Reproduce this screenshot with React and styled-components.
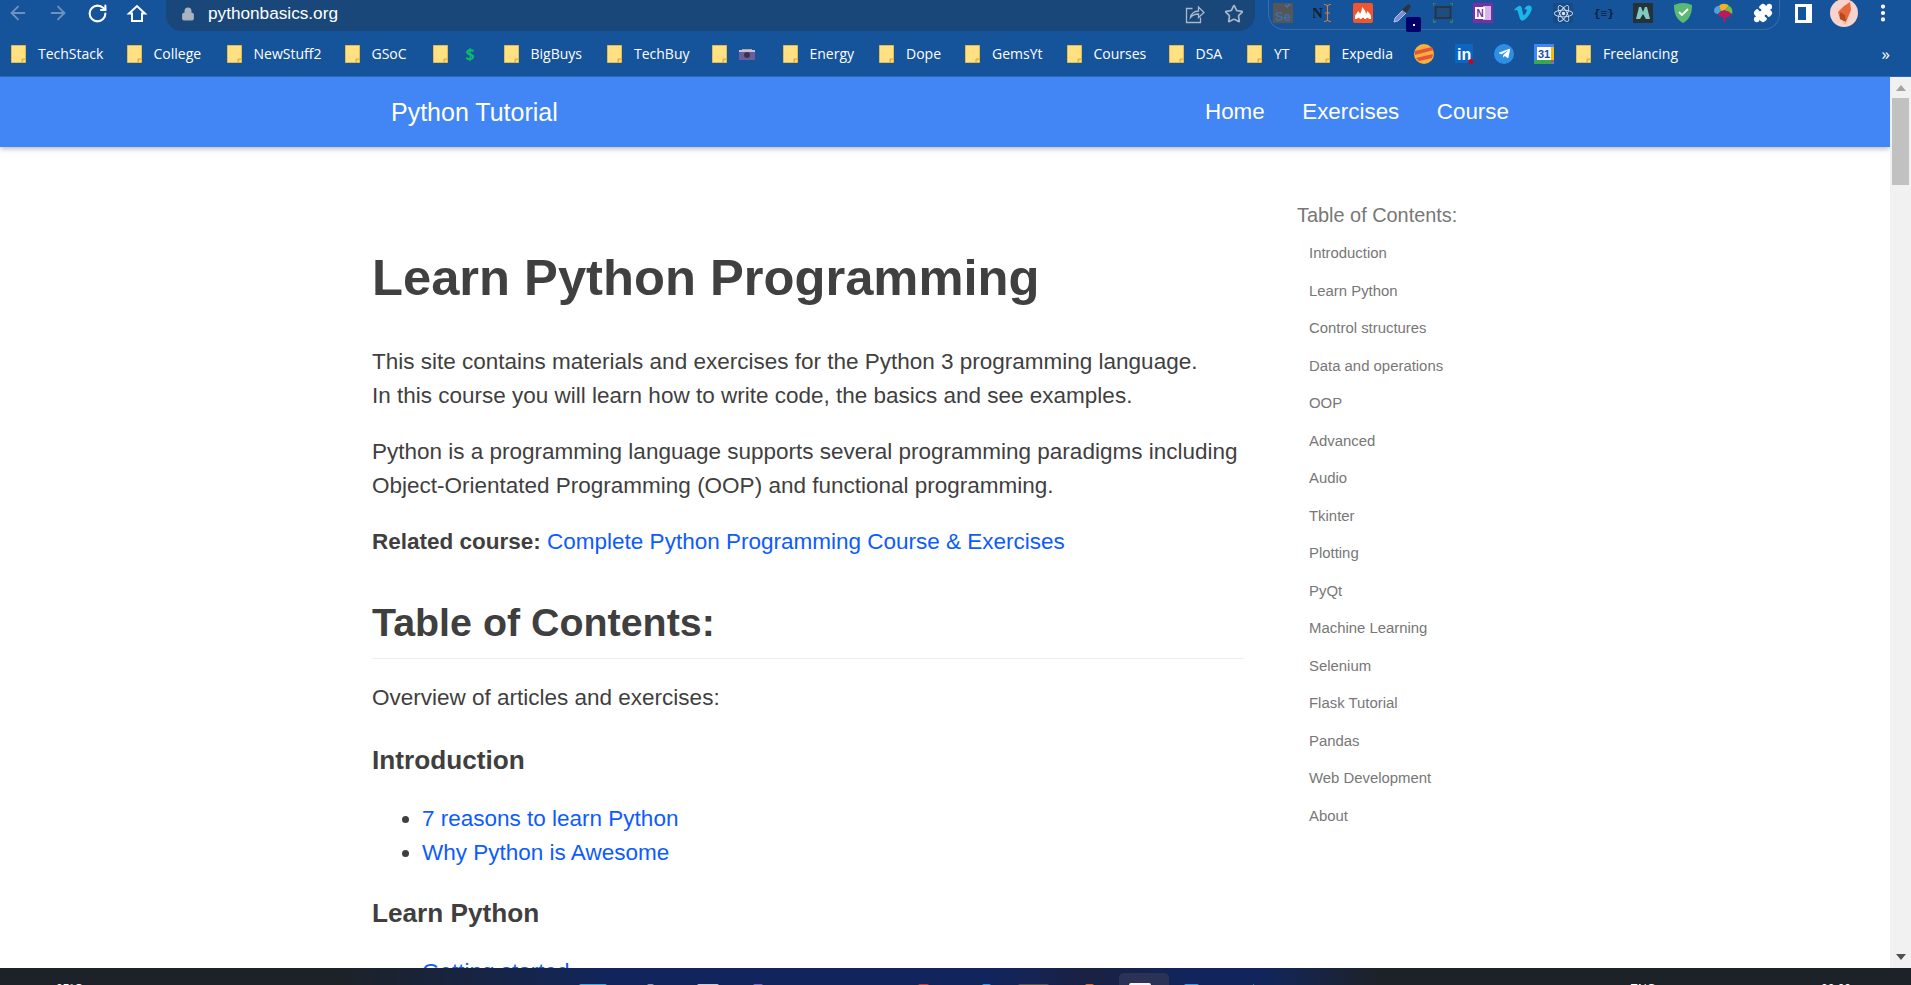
import React from 'react';
import styled, { createGlobalStyle } from 'styled-components';
import { ArrowLeft, ArrowRight, RotateCw, Lock, Star, MoreVertical, Puzzle } from 'lucide-react';
import { FaReact, FaVimeoV, FaTelegramPlane } from 'react-icons/fa';

const GlobalStyle = createGlobalStyle`
  html, body {
    margin: 0;
    padding: 0;
    height: 100%;
    overflow: hidden;
    font-family: "Liberation Sans", Arial, sans-serif;
    background: #fff;
  }
`;

const Screen = styled.div`
  width: 1911px;
  height: 985px;
  display: flex;
  flex-direction: column;
  overflow: hidden;
`;

const Toolbar = styled.div`
  height: 38px;
  flex: none;
  background: #15539b;
  display: flex;
  align-items: flex-start;
`;

const NavButtons = styled.div`
  width: 166px;
  height: 26px;
  display: flex;
  align-items: center;
  padding-left: 7px;
  gap: 18px;
  box-sizing: border-box;
  flex: none;
`;

const NavIcon = styled.span`
  display: flex;
  color: ${(p) => (p.$dim ? '#6f92bd' : '#ffffff')};
`;

const Omnibox = styled.div`
  width: 1089px;
  height: 31px;
  flex: none;
  background: #1a4779;
  border-radius: 0 0 16px 16px;
  display: flex;
  align-items: center;
  padding: 0 11px 4px 15px;
  box-sizing: border-box;
  color: #fff;
  font-size: 17.2px;
`;

const Url = styled.span`
  margin-left: 13px;
  flex: 1;
`;

const OmniIcons = styled.div`
  display: flex;
  gap: 19px;
  color: #a9b8cb;
`;

const Extensions = styled.div`
  margin-left: 13px;
  width: 512px;
  height: 30px;
  box-sizing: border-box;
  border: 1px solid #3b6aa5;
  border-top: none;
  border-radius: 0 0 16px 16px;
  display: flex;
  align-items: center;
  gap: 20px;
  padding: 0 0 3px 4px;
  flex: none;
`;

const ExtIcon = styled.span`
  width: 20px;
  height: 20px;
  display: flex;
  align-items: center;
  justify-content: center;
  position: relative;
  flex: none;
  background: ${(p) => p.$bg || 'transparent'};
  color: ${(p) => p.$color || '#fff'};
`;

const PickerBadge = styled.span`
  position: absolute;
  left: 13px;
  top: 14px;
  width: 15px;
  height: 15px;
  border-radius: 2px;
  background: #00006b;
  display: flex;
  align-items: center;
  justify-content: center;

  &::after {
    content: '';
    width: 2px;
    height: 2px;
    background: #fff;
  }
`;

const RightTools = styled.div`
  flex: 1;
  height: 26px;
  display: flex;
  align-items: center;
  padding-left: 15px;
  color: #fff;
`;

const PanelIcon = styled.span`
  width: 17px;
  height: 19px;
  border: 3px solid #fff;
  border-right-width: 6px;
  box-sizing: border-box;
  flex: none;
  margin-right: 18px;
`;

const Avatar = styled.span`
  display: flex;
  flex: none;
  margin-right: 14px;
`;

const BookmarksBar = styled.div`
  height: 39px;
  flex: none;
  background: #15539b;
  border-bottom: 1px solid #2c69ae;
  box-sizing: border-box;
  display: flex;
  align-items: center;
  padding: 0 0 7px 11px;
  color: #fff;
  font-family: "Open Sans", sans-serif;
  font-size: 14px;
  position: relative;
`;

const Bookmark = styled.span`
  display: flex;
  align-items: center;
  gap: 12px;
  width: ${(p) => p.$w}px;
  flex: none;
  white-space: nowrap;
`;

const Dollar = styled.span`
  color: #0bbd6b;
  font-weight: 700;
  font-size: 16px;
  margin-left: 6px;
`;

const TelegramBadge = styled.span`
  width: 20px;
  height: 20px;
  border-radius: 50%;
  background: #2f8fe5;
  display: flex;
  align-items: center;
  justify-content: center;
`;

const Overflow = styled.span`
  position: absolute;
  right: 21px;
  top: 4px;
  font-size: 17px;
`;

const Body = styled.div`
  flex: 1;
  min-height: 0;
  display: flex;
`;

const Viewport = styled.div`
  flex: 1;
  min-width: 0;
  overflow: hidden;
`;

const SiteHeader = styled.header`
  height: 70px;
  background: #4285f4;
  box-shadow: 0 2px 5px rgba(0, 0, 0, 0.26);
  color: #fff;
  display: flex;
  align-items: center;
  padding-left: 391px;
  position: relative;
`;

const Brand = styled.div`
  font-size: 25px;
  width: 814px;
`;

const MainNav = styled.nav`
  display: flex;
  gap: 37.5px;
  font-size: 22.4px;
`;

const Columns = styled.div`
  display: flex;
  padding-left: 372px;
`;

const Article = styled.main`
  width: 872px;
  flex: none;
  color: #3f3f3f;
  font-size: 22.5px;
  line-height: 34px;
  padding-top: 103px;
`;

const Title = styled.h1`
  font-size: 50.7px;
  line-height: 56px;
  margin: 0 0 39px;
  color: #404040;
`;

const Para = styled.p`
  margin: 0 0 22px;
`;

const Link = styled.a`
  color: #0d5bff;
  text-decoration: none;
`;

const SectionTitle = styled.h2`
  font-size: 39.4px;
  line-height: 46px;
  margin: 40px 0 22px;
  padding-bottom: 13px;
  border-bottom: 1px solid #eeeeee;
`;

const SubTitle = styled.h3`
  font-size: 26.2px;
  line-height: 34px;
  margin: 28px 0 25px;
`;

const LinkList = styled.ul`
  margin: 0 0 -1px;
  padding-left: 50px;
  line-height: 33.6px;
`;

const Sidebar = styled.aside`
  margin-left: 53px;
  padding-top: 53px;
  color: #777;
`;

const SideTitle = styled.div`
  font-size: 19.9px;
  line-height: 30px;
  margin-bottom: 5px;
`;

const SideLink = styled.div`
  font-size: 14.9px;
  line-height: 37.5px;
  padding-left: 12px;
`;

const Scrollbar = styled.div`
  width: 21px;
  flex: none;
  background: #f1f1f1;
  display: flex;
  flex-direction: column;
  align-items: center;
  position: relative;
  z-index: 2;
`;

const ScrollArrow = styled.span`
  width: 0;
  height: 0;
  border-left: 5px solid transparent;
  border-right: 5px solid transparent;
  ${(p) => (p.$down ? 'border-top: 6px solid #505050;' : 'border-bottom: 6px solid #a3a3a3;')}
  margin: ${(p) => (p.$down ? 'auto 0 8px' : '8px 0 0')};
`;

const ScrollThumb = styled.span`
  width: 17px;
  height: 87px;
  margin-top: 7px;
  background: #c1c1c1;
`;

const Taskbar = styled.div`
  height: 17px;
  flex: none;
  overflow: hidden;
  background: linear-gradient(90deg, #1d2229 0%, #1d2229 18%, #11255c 32%, #11255c 52%, #1a2142 57%, #11255c 62%, #11255c 66%, #1d2229 72%, #1d2229 100%);
  display: flex;
  align-items: flex-start;
  color: #fff;
  font-size: 12px;
`;

// everything on the taskbar is cut off by the window edge, only the tops show
const TaskText = styled.span`
  flex: none;
  width: ${(p) => p.$w}px;
  margin: 14px 0 0 ${(p) => p.$gap}px;
  white-space: nowrap;
`;

const TaskIcon = styled.span`
  flex: none;
  width: ${(p) => p.$w}px;
  height: 10px;
  margin: 16px 0 0 ${(p) => p.$gap}px;
  border-radius: 2px 2px 0 0;
  background: ${(p) => p.$c};
`;

const ActiveTile = styled.span`
  flex: none;
  width: 50px;
  height: 20px;
  margin: 5px 0 0 25px;
  padding: 10px 0 0 10px;
  box-sizing: border-box;
  border-radius: 5px 5px 0 0;
  background: #2a3355;
  display: flex;
`;

const TileGlyph = styled.span`
  width: 22px;
  height: 10px;
  border-radius: 2px 2px 0 0;
  background: #f4f4f4;
`;

const Folder = () => (
  <svg width="15" height="18" viewBox="0 0 15 18">
    <path d="M.5.5h14v17H.5z" fill="#ffe082" stroke="#e2bb4e" />
    <path d="M11 17.5v-3.5h3.5" fill="#f5cf62" stroke="#d6a93a" />
  </svg>
);

const Camera = () => (
  <svg width="16" height="13" viewBox="0 0 16 13">
    <path d="M3 2h10v2H3z" fill="#a9a6b5" />
    <rect y="3" width="16" height="10" fill="#6a5f9a" />
    <rect y="3" width="16" height="2" fill="#c6c2cf" />
    <circle cx="8" cy="8" r="3" fill="#3a3350" />
  </svg>
);

const Ball = () => (
  <svg width="20" height="20" viewBox="0 0 20 20">
    <circle cx="10" cy="10" r="10" fill="#f9b233" />
    <path d="M1 7l17-4 1.500 3L1 11zM2 14l17-4-1 4-13 3z" fill="#e8503f" />
  </svg>
);

const LinkedIn = () => (
  <svg width="20" height="20" viewBox="0 0 20 20">
    <rect width="18" height="19" fill="#0a66c2" />
    <text x="2" y="16" fontFamily="Liberation Sans" fontWeight="700" fontSize="16" fill="#fff">in</text>
    <circle cx="16" cy="17.500" r="2.500" fill="#d0021b" />
  </svg>
);

const Calendar = () => (
  <svg width="20" height="20" viewBox="0 0 20 20">
    <rect width="20" height="20" fill="#4285f4" />
    <rect x="3" y="3" width="14" height="13" fill="#fff" />
    <rect x="17" y="3" width="3" height="13" fill="#fbbc04" />
    <rect y="16" width="17" height="4" fill="#34a853" />
    <path d="M17 16h3l-3 4z" fill="#ea4335" />
    <text x="4" y="14" fontFamily="Liberation Sans" fontWeight="700" fontSize="11" fill="#1a4fa0">31</text>
  </svg>
);

const HomeGlyph = () => (
  <svg width="22" height="22" viewBox="0 0 22 22" fill="none" stroke="currentColor" strokeWidth="2" strokeLinejoin="miter">
    <path d="M3 11.500L11 4l8 7.500h-3V19H6v-7.500z" />
  </svg>
);

const ShareGlyph = () => (
  <svg width="20" height="20" viewBox="0 0 20 20" fill="none" stroke="currentColor" strokeWidth="1.300">
    <path d="M7.500 4.500H1.500v14h14v-5" />
    <path d="M5.500 13.500c.5-4 4-6.500 8-6.500V3l5.500 5.500-5.500 5V10c-3 0-6 1-8 3.500z" />
  </svg>
);

const Fox = () => (
  <svg width="28" height="28" viewBox="0 0 28 28">
    <circle cx="14" cy="14" r="14" fill="#f6d3cc" />
    <path d="M20 3l1 8-5 12-6-3-2-7 6-6z" fill="#e8683a" />
    <path d="M10 13l5 3 1 7-6-3z" fill="#b8481f" />
    <path d="M12 22l5 1-2 3z" fill="#f1b98f" />
  </svg>
);

const Flame = () => (
  <svg width="20" height="20" viewBox="0 0 20 20">
    <rect width="20" height="20" rx="2" fill="#f0552d" />
    <path d="M2 14c0-3 2-3 3-6 1 1 2 2 2 3 1-2 2-4 2-7 2 2 4 4 4 7 1-1 1-2 1-3 2 2 4 3 4 6v2H2z" fill="#fff" />
    <circle cx="5.500" cy="16" r="1.300" fill="#f0552d" />
    <circle cx="10" cy="16" r="1.300" fill="#f0552d" />
    <circle cx="14.500" cy="16" r="1.300" fill="#f0552d" />
  </svg>
);

const Dropper = () => (
  <svg width="20" height="20" viewBox="0 0 20 20">
    <path d="M1 19l1-4L10 7l3 3-8 8z" fill="#7d8ed8" stroke="#dfe5f5" strokeWidth="0.700" />
    <path d="M10 6l4-4c1-1 2-1 3 0s1 2 0 3l-3 4-1 1-4-3z" fill="#2c3340" />
  </svg>
);

const ScreenFrame = () => (
  <svg width="20" height="20" viewBox="0 0 20 20">
    <rect x="2.500" y="4" width="15" height="11" fill="#1f4d7c" stroke="#2c3340" strokeWidth="1.800" />
    <path d="M0 3V0h3M17 0h3v3M0 16v3h3M17 19h3v-3" fill="none" stroke="#3f8f3a" strokeWidth="1.500" />
  </svg>
);

const OneNote = () => (
  <svg width="20" height="20" viewBox="0 0 20 20">
    <rect width="20" height="20" fill="#7a2ea0" />
    <rect x="10" y="3" width="8" height="14" fill="#d6b6e6" />
    <rect x="2" y="4" width="10" height="12" fill="#fff" />
    <text x="3.500" y="14" fontFamily="Liberation Sans" fontWeight="700" fontSize="10" fill="#7a2ea0">N</text>
  </svg>
);

const Shield = () => (
  <svg width="20" height="22" viewBox="0 0 20 22">
    <path d="M10 1c3 0 6 .8 9 2 0 8-2 14-9 18C3 17 1 11 1 3c3-1.200 6-2 9-2z" fill="#5bb974" />
    <path d="M6 10l3 3 6-6" fill="none" stroke="#fff" strokeWidth="1.800" />
  </svg>
);

const Brain = () => (
  <svg width="20" height="20" viewBox="0 0 20 20">
    <path d="M1 8c0-3 2-5 5-5l2 5-3 3c-2 0-4-1-4-3z" fill="#4fa3d8" />
    <path d="M6 3c2-3 8-3 10 0l-4 4-4 1z" fill="#f4b223" />
    <path d="M16 3c3 1 4 5 3 8l-4-1-3-3z" fill="#6fbf4a" />
    <path d="M5 11l4-3 6 0 4 3-3 3-4 1 1 5-2-1-1-5c-3 0-5-1-5-3z" fill="#c2185b" />
  </svg>
);

const Ni = () => (
  <svg width="20" height="20" viewBox="0 0 20 20">
    <text x="-1" y="15" fontFamily="Liberation Serif" fontWeight="700" fontSize="15" fill="#14202e">N</text>
    <path d="M11 1.500c2 0 3 .5 3.500 1.500.5-1 1.500-1.500 3.500-1.500M14.500 3v14M11 18.500c2 0 3-.5 3.500-1.500.5 1 1.500 1.500 3.500 1.500M12 10h5" fill="none" stroke="#d8813c" strokeWidth="1.100" />
  </svg>
);

const Selenium = () => (
  <svg width="20" height="20" viewBox="0 0 20 20">
    <rect width="20" height="20" fill="#565656" />
    <path d="M12 2l2 2 3-3" fill="none" stroke="#3f78b8" strokeWidth="1.500" />
    <text x="2" y="18" fontFamily="Liberation Sans" fontWeight="700" fontSize="13" fill="#3d6ea8">Se</text>
  </svg>
);

const Mongo = () => (
  <svg width="20" height="20" viewBox="0 0 20 20">
    <rect width="20" height="20" fill="#263238" />
    <path d="M3 16L6 4h2l2 5 2-5h2l3 12h-4l-3-5-3 5z" fill="#80cbc4" />
  </svg>
);

const bookmarks = [
  { label: 'TechStack', w: 115.5 },
  { label: 'College', w: 100 },
  { label: 'NewStuff2', w: 118 },
  { label: 'GSoC', w: 88 },
  { label: <Dollar>$</Dollar>, w: 71 },
  { label: 'BigBuys', w: 103.5 },
  { label: 'TechBuy', w: 104.5 },
  { label: <Camera />, w: 71 },
  { label: 'Energy', w: 96.5 },
  { label: 'Dope', w: 86 },
  { label: 'GemsYt', w: 101.5 },
  { label: 'Courses', w: 102 },
  { label: 'DSA', w: 78.5 },
  { label: 'YT', w: 67.5 },
  { label: 'Expedia', w: 99.5 },
];

const sideLinks = [
  'Introduction', 'Learn Python', 'Control structures', 'Data and operations', 'OOP', 'Advanced',
  'Audio', 'Tkinter', 'Plotting', 'PyQt', 'Machine Learning', 'Selenium', 'Flask Tutorial',
  'Pandas', 'Web Development', 'About',
];

export default function App() {
  return (
    <Screen>
      <GlobalStyle />
      <Toolbar>
        <NavButtons>
          <NavIcon $dim><ArrowLeft size={22} /></NavIcon>
          <NavIcon $dim><ArrowRight size={22} /></NavIcon>
          <NavIcon><RotateCw size={21} strokeWidth={2.4} /></NavIcon>
          <NavIcon><HomeGlyph /></NavIcon>
        </NavButtons>
        <Omnibox>
          <Lock size={14} fill="#a9b4c0" color="#a9b4c0" />
          <Url>pythonbasics.org</Url>
          <OmniIcons>
            <ShareGlyph />
            <Star size={20} />
          </OmniIcons>
        </Omnibox>
        <Extensions>
          <ExtIcon><Selenium /></ExtIcon>
          <ExtIcon><Ni /></ExtIcon>
          <ExtIcon><Flame /></ExtIcon>
          <ExtIcon><Dropper /><PickerBadge /></ExtIcon>
          <ExtIcon><ScreenFrame /></ExtIcon>
          <ExtIcon><OneNote /></ExtIcon>
          <ExtIcon $color="#1ab7ea"><FaVimeoV size={20} /></ExtIcon>
          <ExtIcon $bg="#174a86" $color="#e3ebf5"><FaReact size={19} /></ExtIcon>
          <ExtIcon $color="#0c1f33">
            <svg width="20" height="20" viewBox="0 0 20 20">
              <text x="1" y="14" fontFamily="Liberation Mono" fontWeight="700" fontSize="11" fill="currentColor">{'{≡}'}</text>
            </svg>
          </ExtIcon>
          <ExtIcon><Mongo /></ExtIcon>
          <ExtIcon><Shield /></ExtIcon>
          <ExtIcon><Brain /></ExtIcon>
          <ExtIcon><Puzzle size={20} fill="#fff" color="#fff" /></ExtIcon>
        </Extensions>
        <RightTools>
          <PanelIcon />
          <Avatar><Fox /></Avatar>
          <MoreVertical size={22} strokeWidth={2.6} />
        </RightTools>
      </Toolbar>
      <BookmarksBar>
        {bookmarks.map((b, i) => (
          <Bookmark key={i} $w={b.w}><Folder />{b.label}</Bookmark>
        ))}
        <Bookmark $w={41}><Ball /></Bookmark>
        <Bookmark $w={39}><LinkedIn /></Bookmark>
        <Bookmark $w={40}><TelegramBadge><FaTelegramPlane size={13} /></TelegramBadge></Bookmark>
        <Bookmark $w={42}><Calendar /></Bookmark>
        <Bookmark $w={120}><Folder />Freelancing</Bookmark>
        <Overflow>»</Overflow>
      </BookmarksBar>
      <Body>
        <Viewport>
          <SiteHeader>
            <Brand>Python Tutorial</Brand>
            <MainNav>
              <span>Home</span>
              <span>Exercises</span>
              <span>Course</span>
            </MainNav>
          </SiteHeader>
          <Columns>
            <Article>
              <Title>Learn Python Programming</Title>
              <Para>
                This site contains materials and exercises for the Python 3 programming language.<br />
                In this course you will learn how to write code, the basics and see examples.
              </Para>
              <Para>
                Python is a programming language supports several programming paradigms including Object-Orientated Programming (OOP) and functional programming.
              </Para>
              <Para><strong>Related course:</strong> <Link>Complete Python Programming Course &amp; Exercises</Link></Para>
              <SectionTitle>Table of Contents:</SectionTitle>
              <Para>Overview of articles and exercises:</Para>
              <SubTitle>Introduction</SubTitle>
              <LinkList>
                <li><Link>7 reasons to learn Python</Link></li>
                <li><Link>Why Python is Awesome</Link></li>
              </LinkList>
              <SubTitle>Learn Python</SubTitle>
              <LinkList>
                <li><Link>Getting started</Link></li>
              </LinkList>
            </Article>
            <Sidebar>
              <SideTitle>Table of Contents:</SideTitle>
              {sideLinks.map((s) => <SideLink key={s}>{s}</SideLink>)}
            </Sidebar>
          </Columns>
        </Viewport>
        <Scrollbar>
          <ScrollArrow />
          <ScrollThumb />
          <ScrollArrow $down />
        </Scrollbar>
      </Body>
      <Taskbar>
        <TaskText $gap={56} $w={32}>25°C</TaskText>
        <TaskIcon $gap={491} $w={28} $c="#3fa9e0" />
        <TaskIcon $gap={40} $w={7} $c="#9aa0b0" />
        <TaskIcon $gap={43} $w={22} $c="#c9cdd8" />
        <TaskIcon $gap={34} $w={10} $c="#7a6fd0" />
        <TaskIcon $gap={155} $w={11} $c="#d13a3a" />
        <TaskIcon $gap={53} $w={9} $c="#2f9fe8" />
        <TaskIcon $gap={27} $w={31} $c="#555555" />
        <TaskIcon $gap={36} $w={9} $c="#e0702a" />
        <ActiveTile><TileGlyph /></ActiveTile>
        <TaskIcon $gap={15} $w={15} $c="#3d9be9" />
        <TaskIcon $gap={54} $w={1} $c="#3fa35a" />
        <TaskText $gap={376} $w={30}>ENG</TaskText>
        <TaskText $gap={161} $w={40}>22:00</TaskText>
      </Taskbar>
    </Screen>
  );
}
